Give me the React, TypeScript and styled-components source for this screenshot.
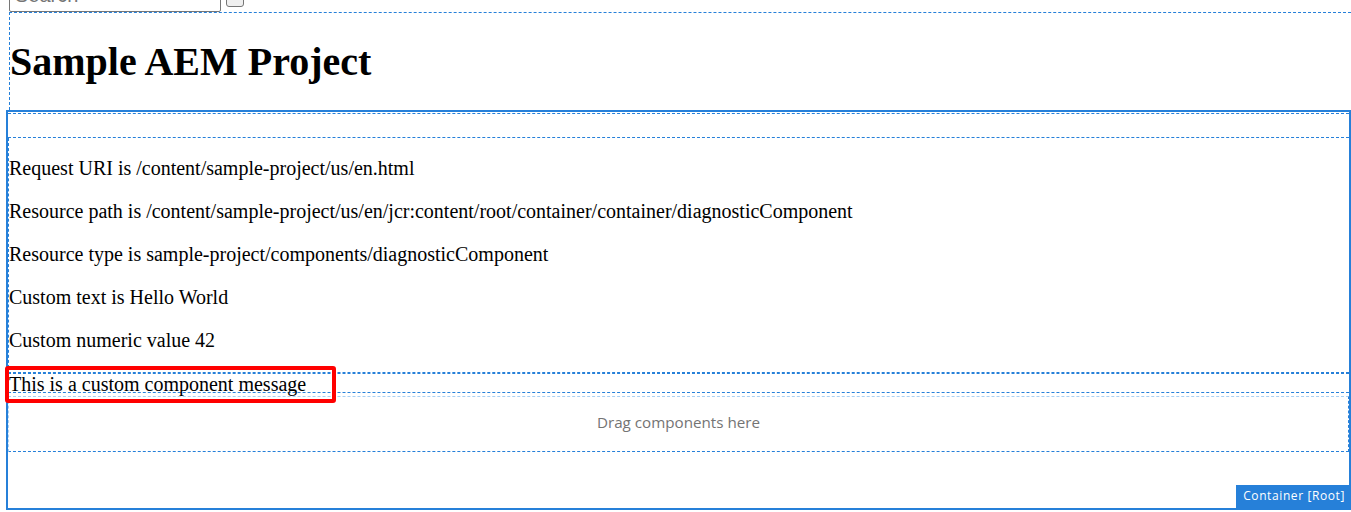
import React from "react";
import styled, { createGlobalStyle } from "styled-components";

const BLUE = "#2680d9";
const LIGHT_BLUE = "#a9d0f3";

const Global = createGlobalStyle`
  html, body { margin: 0; padding: 0; background: #fff; }
  body {
    font-family: "Liberation Serif", "Times New Roman", serif;
    color: #000;
    overflow: hidden;
  }
`;

const Page = styled.div`
  width: 1351px;
  height: 512px;
  overflow: hidden;
  padding-left: 6px;
  box-sizing: border-box;
`;

const SearchBar = styled.form`
  display: flex;
  align-items: flex-end;
  height: 12px;
  margin: 0 0 0 3px;
  gap: 5px;
`;

const SearchInput = styled.input`
  box-sizing: border-box;
  width: 212px;
  height: 31px;
  border: 1px solid #767676;
  border-radius: 2px;
  padding: 0 5px 3px;
  font: 20px "Liberation Sans", Arial, sans-serif;
  color: #000;
  background: #fff;
  &::placeholder {
    color: #757575;
  }
`;

const SearchButton = styled.button`
  box-sizing: border-box;
  width: 18px;
  height: 20px;
  margin-bottom: 5px;
  border: 1px solid #767676;
  border-radius: 3px;
  background: #efefef;
  padding: 0;
`;

const PageOverlay = styled.header`
  margin-left: 3px;
  height: 98px;
  box-sizing: border-box;
  border-top: 1px dashed ${BLUE};
  border-left: 1px dashed ${BLUE};
  padding-top: 26px;
`;

const Title = styled.h1`
  margin: 0;
  font-size: 40px;
  line-height: 46px;
  font-weight: bold;
`;

const RootContainer = styled.section`
  position: relative;
  width: 1345px;
  height: 400px;
  box-sizing: border-box;
  border: 2px solid ${BLUE};
  display: flex;
  flex-direction: column;
`;

const EmptySlot = styled.div`
  margin-top: 1px;
  height: 25px;
  box-sizing: border-box;
  border-top: 1px dashed ${BLUE};
  border-bottom: 1px dashed ${BLUE};
`;

const Diagnostic = styled.div`
  display: flex;
  flex-direction: column;
  gap: 20px;
  padding: 19px 0 20px;
  border-left: 1px dashed ${BLUE};
  border-bottom: 1px dashed ${BLUE};
`;

const Line = styled.p`
  margin: 0;
  font-size: 20px;
  line-height: 23px;
`;

const CustomMessage = styled.div`
  position: relative;
  height: 18px;
  padding-left: 1px;
  border-top: 1px dashed ${BLUE};
  border-bottom: 1px dashed ${BLUE};
  font-size: 20px;
  line-height: 20px;
  white-space: nowrap;
`;

const Highlight = styled.span`
  position: absolute;
  left: -3px;
  top: -8px;
  width: 331px;
  height: 37px;
  box-sizing: border-box;
  border: 4px solid #ff0000;
  border-radius: 3px;
  pointer-events: none;
`;

const DropZone = styled.div`
  margin-top: 3px;
  height: 56px;
  box-sizing: border-box;
  border: 1px dashed ${BLUE};
  border-top-color: ${LIGHT_BLUE};
  border-left-color: ${LIGHT_BLUE};
  display: flex;
  align-items: center;
  justify-content: center;
  padding-bottom: 5px;
  font-family: "Open Sans", "Noto Sans", sans-serif;
  font-size: 15.2px;
  color: #747474;
`;

const Badge = styled.div`
  position: absolute;
  right: 0;
  bottom: 0;
  height: 23px;
  padding: 0 4px 0 7px;
  background: ${BLUE};
  color: #fff;
  font-family: "Open Sans", "Noto Sans", sans-serif;
  font-size: 12px;
  letter-spacing: 0.6px;
  line-height: 22px;
`;

const lines = [
  "Request URI is /content/sample-project/us/en.html",
  "Resource path is /content/sample-project/us/en/jcr:content/root/container/container/diagnosticComponent",
  "Resource type is sample-project/components/diagnosticComponent",
  "Custom text is Hello World",
  "Custom numeric value 42",
];

export default function App() {
  return (
    <Page>
      <Global />
      <SearchBar onSubmit={(e) => e.preventDefault()}>
        <SearchInput placeholder="Search" />
        <SearchButton type="submit" aria-label="Search" />
      </SearchBar>
      <PageOverlay>
        <Title>Sample AEM Project</Title>
      </PageOverlay>
      <RootContainer>
        <EmptySlot />
        <Diagnostic>
          {lines.map((l) => (
            <Line key={l}>{l}</Line>
          ))}
        </Diagnostic>
        <CustomMessage>
          This is a custom component message
          <Highlight />
        </CustomMessage>
        <DropZone>Drag components here</DropZone>
        <Badge>Container [Root]</Badge>
      </RootContainer>
    </Page>
  );
}
